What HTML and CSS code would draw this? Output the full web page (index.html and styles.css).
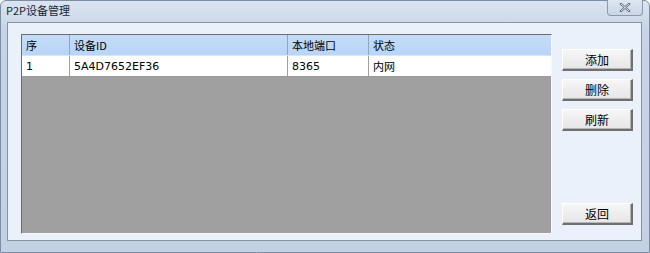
FILE: index.html
```html
<!DOCTYPE html>
<html>
<head>
<meta charset="utf-8">
<link rel="stylesheet" href="styles.css">
</head>
<body>
<div class="window">
  <div class="titlebar">
    <span class="title">P2P设备管理</span>
    <div class="close"><svg width="12" height="9" viewBox="0 0 12 9"><path d="M2 1 L10 8 M10 1 L2 8" stroke="#5a6372" stroke-width="2.2" stroke-linecap="square" fill="none"/><path d="M2 1 L10 8 M10 1 L2 8" stroke="#f4f6f9" stroke-width="0.9" fill="none"/></svg></div>
  </div>
  <div class="frame">
    <div class="client">
      <div class="grid">
        <div class="row head">
          <div class="c c1">序</div>
          <div class="c c2">设备ID</div>
          <div class="c c3">本地端口</div>
          <div class="c c4">状态</div>
        </div>
        <div class="row data">
          <div class="c c1">1</div>
          <div class="c c2">5A4D7652EF36</div>
          <div class="c c3">8365</div>
          <div class="c c4">内网</div>
        </div>
        <div class="empty"></div>
      </div>
      <div class="buttons">
        <button class="btn">添加</button>
        <button class="btn">删除</button>
        <button class="btn">刷新</button>
        <div class="spacer"></div>
        <button class="btn">返回</button>
      </div>
    </div>
  </div>
</div>
</body>
</html>
```

FILE: styles.css
```css
html, body {
  margin: 0;
  padding: 0;
  background: #ffffff;
}
body {
  font-family: "DejaVu Sans", "Noto Sans CJK SC", sans-serif;
  font-size: 11px;
  color: #000;
}
.window {
  width: 650px;
  height: 253px;
  box-sizing: border-box;
  background: linear-gradient(#dbe5f1, #c6d4e5 30px, #c3d1e3);
  border: 1px solid #7d8ea4;
  border-radius: 6px 6px 0 0;
  display: flex;
  flex-direction: column;
  position: relative;
}
.titlebar {
  height: 21px;
  display: flex;
  align-items: center;
  padding-left: 5px;
}
.title {
  font-family: "Noto Sans CJK SC", sans-serif;
  font-size: 11px;
  color: #1b2633;
  margin-top: -4px;
}
.close {
  position: absolute;
  right: 6px;
  top: -1px;
  width: 36px;
  height: 16px;
  border: 1px solid #8a99ad;
  border-top: none;
  border-radius: 0 0 4px 4px;
  background: linear-gradient(#dde6f1, #c9d6e6);
  display: flex;
  align-items: center;
  justify-content: center;
  box-sizing: border-box;
}
.frame {
  flex: 1;
  margin: 0 7px 11px 6px;
  border: 1px solid #8593a6;
  background: #eaf1fb;
  display: flex;
}
.client {
  flex: 1;
  display: flex;
  padding: 11px 0 6px 13px;
}
.grid {
  width: 529px;
  height: 198px;
  border-top: 1px solid #6c6c6c;
  border-left: 1px solid #6c6c6c;
  border-right: 1px solid #f8f8f8;
  border-bottom: 1px solid #f8f8f8;
  display: flex;
  flex-direction: column;
  background: #a0a0a0;
}
.row {
  display: flex;
  height: 20px;
  border-bottom: 1px solid #a0a0a0;
}
.row.head {
  background: linear-gradient(#c4dcf7, #b8d5f7);
  border-bottom: 1px solid #d8e6f5;
  font-family: "Noto Sans CJK SC", sans-serif;
  font-size: 11px;
}
.row.data {
  background: #ffffff;
  height: 20px;
  border-bottom: 1px solid #9a9a9a;
}
.c {
  box-sizing: border-box;
  padding-left: 4px;
  display: flex;
  align-items: center;
  border-right: 1px solid #a0a0a0;
  white-space: nowrap;
}
.head .c {
  border-right: 1px solid #8da6c2;
}
.data .c4, .head .c4 { border-right: none; }
.data .c4 { font-family: "Noto Sans CJK SC", sans-serif; }
.c1 { width: 48px; }
.c2 { width: 218px; }
.c3 { width: 81px; }
.c4 { flex: 1; }
.empty { flex: 1; }
.buttons {
  display: flex;
  flex-direction: column;
  gap: 8px;
  padding: 15px 0 9px 10px;
}
.spacer { flex: 1; }
.btn {
  width: 71px;
  height: 22px;
  margin: 0;
  padding: 0;
  font-family: "Noto Sans CJK SC", sans-serif;
  font-size: 12px;
  color: #000;
  background: linear-gradient(#f6f6f6, #e6e6e6);
  border-top: 1px solid #ffffff;
  border-left: 1px solid #ffffff;
  border-right: 2px solid #6f6f6f;
  border-bottom: 2px solid #6f6f6f;
  box-shadow: inset -1px -1px 0 #b5b5b5;
}
```
